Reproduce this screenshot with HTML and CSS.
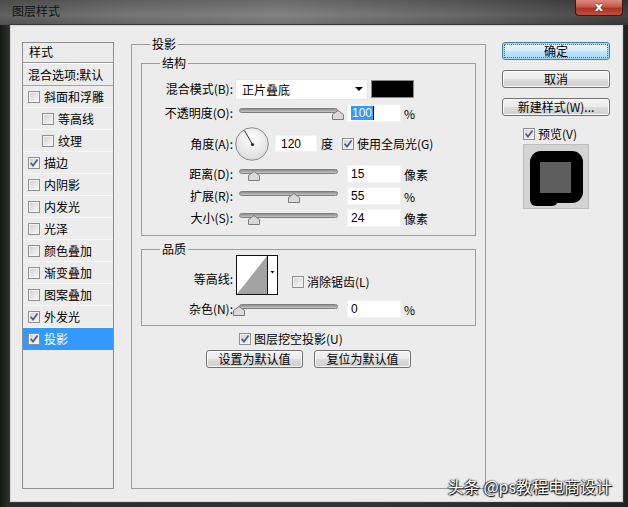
FILE: index.html
```html
<!DOCTYPE html>
<html lang="zh-CN">
<head>
<meta charset="utf-8">
<title>图层样式</title>
<link rel="stylesheet" href="styles.css">
</head>
<body>
<div class="window">
  <div class="titlebar">
    <span class="title">图层样式</span>
    <span class="close">x</span>
  </div>
  <div class="client">
    <div class="list">
      <div class="lhead">样式</div>
      <div class="lblend">混合选项:默认</div>
      <div class="litem"><span class="cb"></span><span>斜面和浮雕</span></div>
      <div class="litem sub"><span class="cb"></span><span>等高线</span></div>
      <div class="litem sub"><span class="cb"></span><span>纹理</span></div>
      <div class="litem"><span class="cb"><svg class="tick" viewBox="0 0 10 10"><path d="M1.6 4.8 L4 7.6 L8.6 1.6"/></svg></span><span>描边</span></div>
      <div class="litem"><span class="cb"></span><span>内阴影</span></div>
      <div class="litem"><span class="cb"></span><span>内发光</span></div>
      <div class="litem"><span class="cb"></span><span>光泽</span></div>
      <div class="litem"><span class="cb"></span><span>颜色叠加</span></div>
      <div class="litem"><span class="cb"></span><span>渐变叠加</span></div>
      <div class="litem"><span class="cb"></span><span>图案叠加</span></div>
      <div class="litem"><span class="cb"><svg class="tick" viewBox="0 0 10 10"><path d="M1.6 4.8 L4 7.6 L8.6 1.6"/></svg></span><span>外发光</span></div>
      <div class="litem sel"><span class="cb"><svg class="tick" viewBox="0 0 10 10"><path d="M1.6 4.8 L4 7.6 L8.6 1.6"/></svg></span><span>投影</span></div>
    </div>

    <fieldset class="group outer">
      <legend>投影</legend>
      <fieldset class="group inner struct">
        <legend>结构</legend>
        <div class="row r-blend">
          <span class="lbl">混合模式(B):</span>
          <div class="select"><span>正片叠底</span><span class="arrow"></span></div>
          <span class="swatch"></span>
        </div>
        <div class="row r-s">
          <span class="lbl">不透明度(O):</span>
          <div class="slider"><span class="track"></span><svg class="thumb" style="left:96px" viewBox="0 0 12 10"><path d="M6 0.5 L11.5 4.5 V9.5 H0.5 V4.5 Z"/></svg></div>
          <div class="num"><span class="hl">100</span><span class="caret"></span></div>
          <span class="unit">%</span>
        </div>
        <div class="row r-angle">
          <span class="lbl">角度(A):</span>
          <svg class="dial" viewBox="0 0 34 34">
            <defs><radialGradient id="dg" cx="50%" cy="35%" r="70%"><stop offset="0" stop-color="#ffffff"/><stop offset="1" stop-color="#dadada"/></radialGradient></defs>
            <circle cx="17" cy="17" r="16.3" fill="url(#dg)" stroke="#8a8a8a" stroke-width="1"/>
            <line x1="17.5" y1="17.5" x2="9.5" y2="3.6" stroke="#2a2a2a" stroke-width="1"/>
            <circle cx="17.5" cy="17.5" r="1.6" fill="#2a2a2a"/>
          </svg>
          <div class="num short">120</div>
          <span class="deg">度</span>
          <span class="cb gl"><svg class="tick" viewBox="0 0 10 10"><path d="M1.6 4.8 L4 7.6 L8.6 1.6"/></svg></span>
          <span class="cbt">使用全局光(G)</span>
        </div>
        <div class="row r-s">
          <span class="lbl">距离(D):</span>
          <div class="slider"><span class="track"></span><svg class="thumb" style="left:12px" viewBox="0 0 12 10"><path d="M6 0.5 L11.5 4.5 V9.5 H0.5 V4.5 Z"/></svg></div>
          <div class="num">15</div>
          <span class="unit">像素</span>
        </div>
        <div class="row r-s">
          <span class="lbl">扩展(R):</span>
          <div class="slider"><span class="track"></span><svg class="thumb" style="left:52px" viewBox="0 0 12 10"><path d="M6 0.5 L11.5 4.5 V9.5 H0.5 V4.5 Z"/></svg></div>
          <div class="num">55</div>
          <span class="unit">%</span>
        </div>
        <div class="row r-s">
          <span class="lbl">大小(S):</span>
          <div class="slider"><span class="track"></span><svg class="thumb" style="left:12px" viewBox="0 0 12 10"><path d="M6 0.5 L11.5 4.5 V9.5 H0.5 V4.5 Z"/></svg></div>
          <div class="num">24</div>
          <span class="unit">像素</span>
        </div>
      </fieldset>

      <fieldset class="group inner quality">
        <legend>品质</legend>
        <div class="row r-contour">
          <span class="lbl">等高线:</span>
          <svg class="contour" viewBox="0 0 42 40">
            <rect x="0.5" y="0.5" width="41" height="39" fill="#fff" stroke="#111"/>
            <path d="M1 39 L31 1 L31 39 Z" fill="#a3a3a3"/>
            <line x1="31.5" y1="0.5" x2="31.5" y2="39.5" stroke="#111"/>
            <path d="M34.5 16 L38.5 16 L36.5 18.5 Z" fill="#111"/>
          </svg>
          <span class="cb aa"></span>
          <span class="cbt">消除锯齿(L)</span>
        </div>
        <div class="row r-s">
          <span class="lbl">杂色(N):</span>
          <div class="slider"><span class="track"></span><svg class="thumb" style="left:-3px" viewBox="0 0 12 10"><path d="M6 0.5 L11.5 4.5 V9.5 H0.5 V4.5 Z"/></svg></div>
          <div class="num">0</div>
          <span class="unit">%</span>
        </div>
      </fieldset>

      <div class="knock">
        <span class="cb"><svg class="tick" viewBox="0 0 10 10"><path d="M1.6 4.8 L4 7.6 L8.6 1.6"/></svg></span>
        <span class="cbt">图层挖空投影(U)</span>
      </div>
      <div class="defaults">
        <span class="btn">设置为默认值</span>
        <span class="btn">复位为默认值</span>
      </div>
    </fieldset>

    <div class="side">
      <span class="btn wide default">确定</span>
      <span class="btn wide">取消</span>
      <span class="btn wide">新建样式(W)...</span>
      <div class="preview-row">
        <span class="cb"><svg class="tick" viewBox="0 0 10 10"><path d="M1.6 4.8 L4 7.6 L8.6 1.6"/></svg></span>
        <span class="cbt">预览(V)</span>
      </div>
      <div class="preview">
        <svg viewBox="0 0 66 65" width="66" height="65">
          <rect x="7" y="7" width="53" height="52" rx="11" fill="#000"/>
          <rect x="7" y="36" width="28" height="26" rx="6" fill="#000"/>
          <rect x="17" y="18" width="31" height="31" fill="#5e5e5e"/>
        </svg>
      </div>
    </div>
  </div>
  <div class="watermark">头条 @ps教程电商设计</div>
</div>
</body>
</html>
```

FILE: styles.css
```css
* { box-sizing: border-box; }
html, body { margin: 0; padding: 0; }
body {
  width: 628px;
  height: 507px;
  overflow: hidden;
  background: #1c1c1c;
  font-family: "Noto Sans CJK SC", "Liberation Sans", sans-serif;
  font-size: 12px;
  color: #000;
}
.window {
  position: relative;
  width: 628px;
  height: 507px;
  display: flex;
  flex-direction: column;
  background: linear-gradient(90deg, #151a15 0, #2b2b2b 8px, #333 60%, #222 100%);
}
.titlebar {
  height: 25px;
  flex: none;
  display: flex;
  justify-content: space-between;
  align-items: flex-start;
  padding: 0 5px 0 12px;
  background:
    linear-gradient(180deg, rgba(0,0,0,0.15), rgba(255,255,255,0.05) 60%, rgba(0,0,0,0.1)),
    linear-gradient(90deg, #585858 0, #6e6e6e 20%, #7c7c7c 45%, #5e5e5e 75%, #3a3a3a 100%);
}
.title {
  padding-top: 3px;
  line-height: 16px;
  color: #111;
  font-size: 12px;
}
.close {
  width: 48px;
  height: 16px;
  border: 1px solid #3b1712;
  border-top: none;
  border-radius: 0 0 4px 4px;
  background: linear-gradient(180deg, #dc8a7e 0, #c55a4b 45%, #a93425 55%, #c0503c 100%);
  color: #fff;
  font-family: "DejaVu Sans", sans-serif;
  font-weight: bold;
  font-size: 13px;
  line-height: 13px;
  text-align: center;
  text-shadow: 0 0 2px #5a1a10;
}
.client {
  flex: 1;
  margin: 0 5px 5px 10px;
  background: #ececec;
  border: 1px solid #d6d6d6;
  box-shadow: 0 0 0 1px #3a3a3a;
  display: flex;
  align-items: flex-start;
  padding: 10px 0 0 11px;
}

/* ---------- style list ---------- */
.list {
  width: 92px;
  height: 447px;
  margin-top: 6px;
  border: 1px solid #8e8e8e;
  background: #ececec;
}
.lhead {
  height: 20px;
  line-height: 18px;
  padding-left: 6px;
  border-bottom: 1px solid #9a9a9a;
}
.lblend {
  height: 23px;
  line-height: 21px;
  padding-left: 5px;
  border-top: 1px solid #fff;
  border-bottom: 1px solid #a4a4a4;
}
.litem {
  height: 22px;
  display: flex;
  align-items: center;
  padding-left: 5px;
  border-bottom: 1px solid #f7f7f7;
}
.litem.sub { padding-left: 19px; }
.litem .cb { margin-right: 4px; }
.litem.sel {
  background: #3399ff;
  color: #fff;
  border-bottom-color: #3399ff;
}

/* ---------- checkbox ---------- */
.cb {
  display: inline-block;
  flex: none;
  width: 12px;
  height: 12px;
  border: 1px solid #8e8f8f;
  background: linear-gradient(135deg, #cfcfcf 0, #e9e9e9 60%, #f8f8f8 100%);
  box-shadow: inset 0 0 0 1px #f2f2f2;
  position: relative;
}
.tick {
  position: absolute;
  left: 0;
  top: 0;
  width: 10px;
  height: 10px;
  fill: none;
  stroke: #4a5b94;
  stroke-width: 1.7;
}
.cbt { margin-left: 3px; line-height: 16px; }

/* ---------- group boxes ---------- */
.group {
  margin: 0;
  border: 1px solid #9c9c9c;
  min-width: 0;
}
.group > legend {
  padding: 0 2px;
  margin-left: 18px;
  height: 16px;
  line-height: 16px;
}
.outer {
  width: 355px;
  height: 453px;
  margin-left: 17px;
  padding: 3px 9px 0 9px;
}
.outer > legend { margin-left: 9px; }
.inner { padding: 0; }
.struct { padding-top: 7px; padding-bottom: 8px; }
.quality { margin-top: 5px; padding-bottom: 7px; }

.row {
  display: flex;
  align-items: center;
}
.lbl {
  width: 91px;
  text-align: right;
  line-height: 16px;
  flex: none;
}
.r-blend { height: 22px; }
.r-s { height: 18px; margin-top: 4px; }
.r-angle { height: 35px; margin-top: 4px; }

.select {
  width: 133px;
  height: 21px;
  margin-left: 2px;
  background: #fff;
  border: 1px solid #e6e6e6;
  display: flex;
  align-items: center;
  justify-content: space-between;
  padding: 0 4px 0 6px;
}
.arrow {
  width: 0;
  height: 0;
  border-left: 4px solid transparent;
  border-right: 4px solid transparent;
  border-top: 4px solid #000;
}
.swatch {
  width: 43px;
  height: 18px;
  margin-left: 3px;
  background: #000;
  border: 1px solid #8a8a8a;
}

.slider {
  position: relative;
  width: 105px;
  height: 18px;
  margin-left: 3px;
  flex: none;
}
.track {
  position: absolute;
  left: 3px;
  top: 4px;
  width: 99px;
  height: 5px;
  border-radius: 3px;
  border: 1px solid #808080;
  background: linear-gradient(180deg, #8c8c8c, #c6c6c6);
}
.thumb {
  position: absolute;
  top: 6px;
  width: 12px;
  height: 10px;
  fill: #d9d9d9;
  stroke: #7a7a7a;
  stroke-width: 1;
}
.num {
  width: 54px;
  height: 18px;
  margin-left: 6px;
  background: #fff;
  border: 1px solid #f3f3f3;
  padding-left: 3px;
  font-family: "Liberation Sans", sans-serif;
  font-size: 12px;
  line-height: 16px;
  display: flex;
  align-items: center;
  flex: none;
}
.num.short { width: 42px; height: 17px; margin-left: 6px; padding-left: 5px; }
.hl { background: #3399ff; color: #fff; line-height: 14px; padding: 0 1px; }
.caret { width: 1px; height: 14px; background: #000; }
.unit { margin-left: 3px; }
.dial { width: 34px; height: 34px; margin-left: 2px; flex: none; }
.deg { margin-left: 4px; }
.cb.gl { margin-left: 9px; }

.r-contour {
  height: 40px;
  margin-top: -2px;
  align-items: flex-start;
}
.r-contour .lbl { margin-top: 16px; }
.contour { width: 42px; height: 40px; margin-left: 3px; flex: none; }
.cb.aa { margin-left: 14px; margin-top: 21px; }
.r-contour .cbt { margin-top: 19px; }
.quality .r-s { margin-top: 5px; }

.knock {
  display: flex;
  align-items: center;
  height: 16px;
  margin-top: 5px;
  padding-left: 98px;
}
.defaults {
  display: flex;
  justify-content: center;
  gap: 11px;
  margin-top: 3px;
}

/* ---------- buttons ---------- */
.btn {
  display: block;
  width: 97px;
  height: 18px;
  border: 1px solid #707070;
  border-radius: 3px;
  background: linear-gradient(180deg, #f3f3f3 0, #ebebeb 48%, #dcdcdc 52%, #cfcfcf 100%);
  box-shadow: inset 0 0 0 1px #fbfbfb;
  text-align: center;
  line-height: 16px;
  font-size: 12px;
}
.btn.wide { width: 108px; margin-bottom: 10px; }
.btn.default {
  border-color: #3c7fb1;
  background: linear-gradient(180deg, #eaf6fd 0, #d9f0fc 48%, #bee6fd 52%, #a7d9f5 100%);
  box-shadow: inset 0 0 0 1px #a8d8f0;
  outline: 1px dotted #4d6a80;
  outline-offset: -3px;
}

/* ---------- right column ---------- */
.side {
  width: 108px;
  margin-left: 16px;
  padding-top: 6px;
}
.preview-row {
  display: flex;
  align-items: center;
  height: 16px;
  margin-top: 1px;
  padding-left: 21px;
}
.preview {
  width: 66px;
  height: 65px;
  margin: 2px 0 0 21px;
  background: #d3d3d3;
  border: 1px solid #bdbdbd;
  overflow: hidden;
}
.preview svg { display: block; margin: -1px 0 0 -1px; }

.watermark {
  position: absolute;
  right: 16px;
  bottom: 11px;
  font-size: 16px;
  line-height: 20px;
  color: #fff;
  text-shadow: 0 0 2px #000, 1px 1px 1px #000, -1px 0 1px #333;
}
```
